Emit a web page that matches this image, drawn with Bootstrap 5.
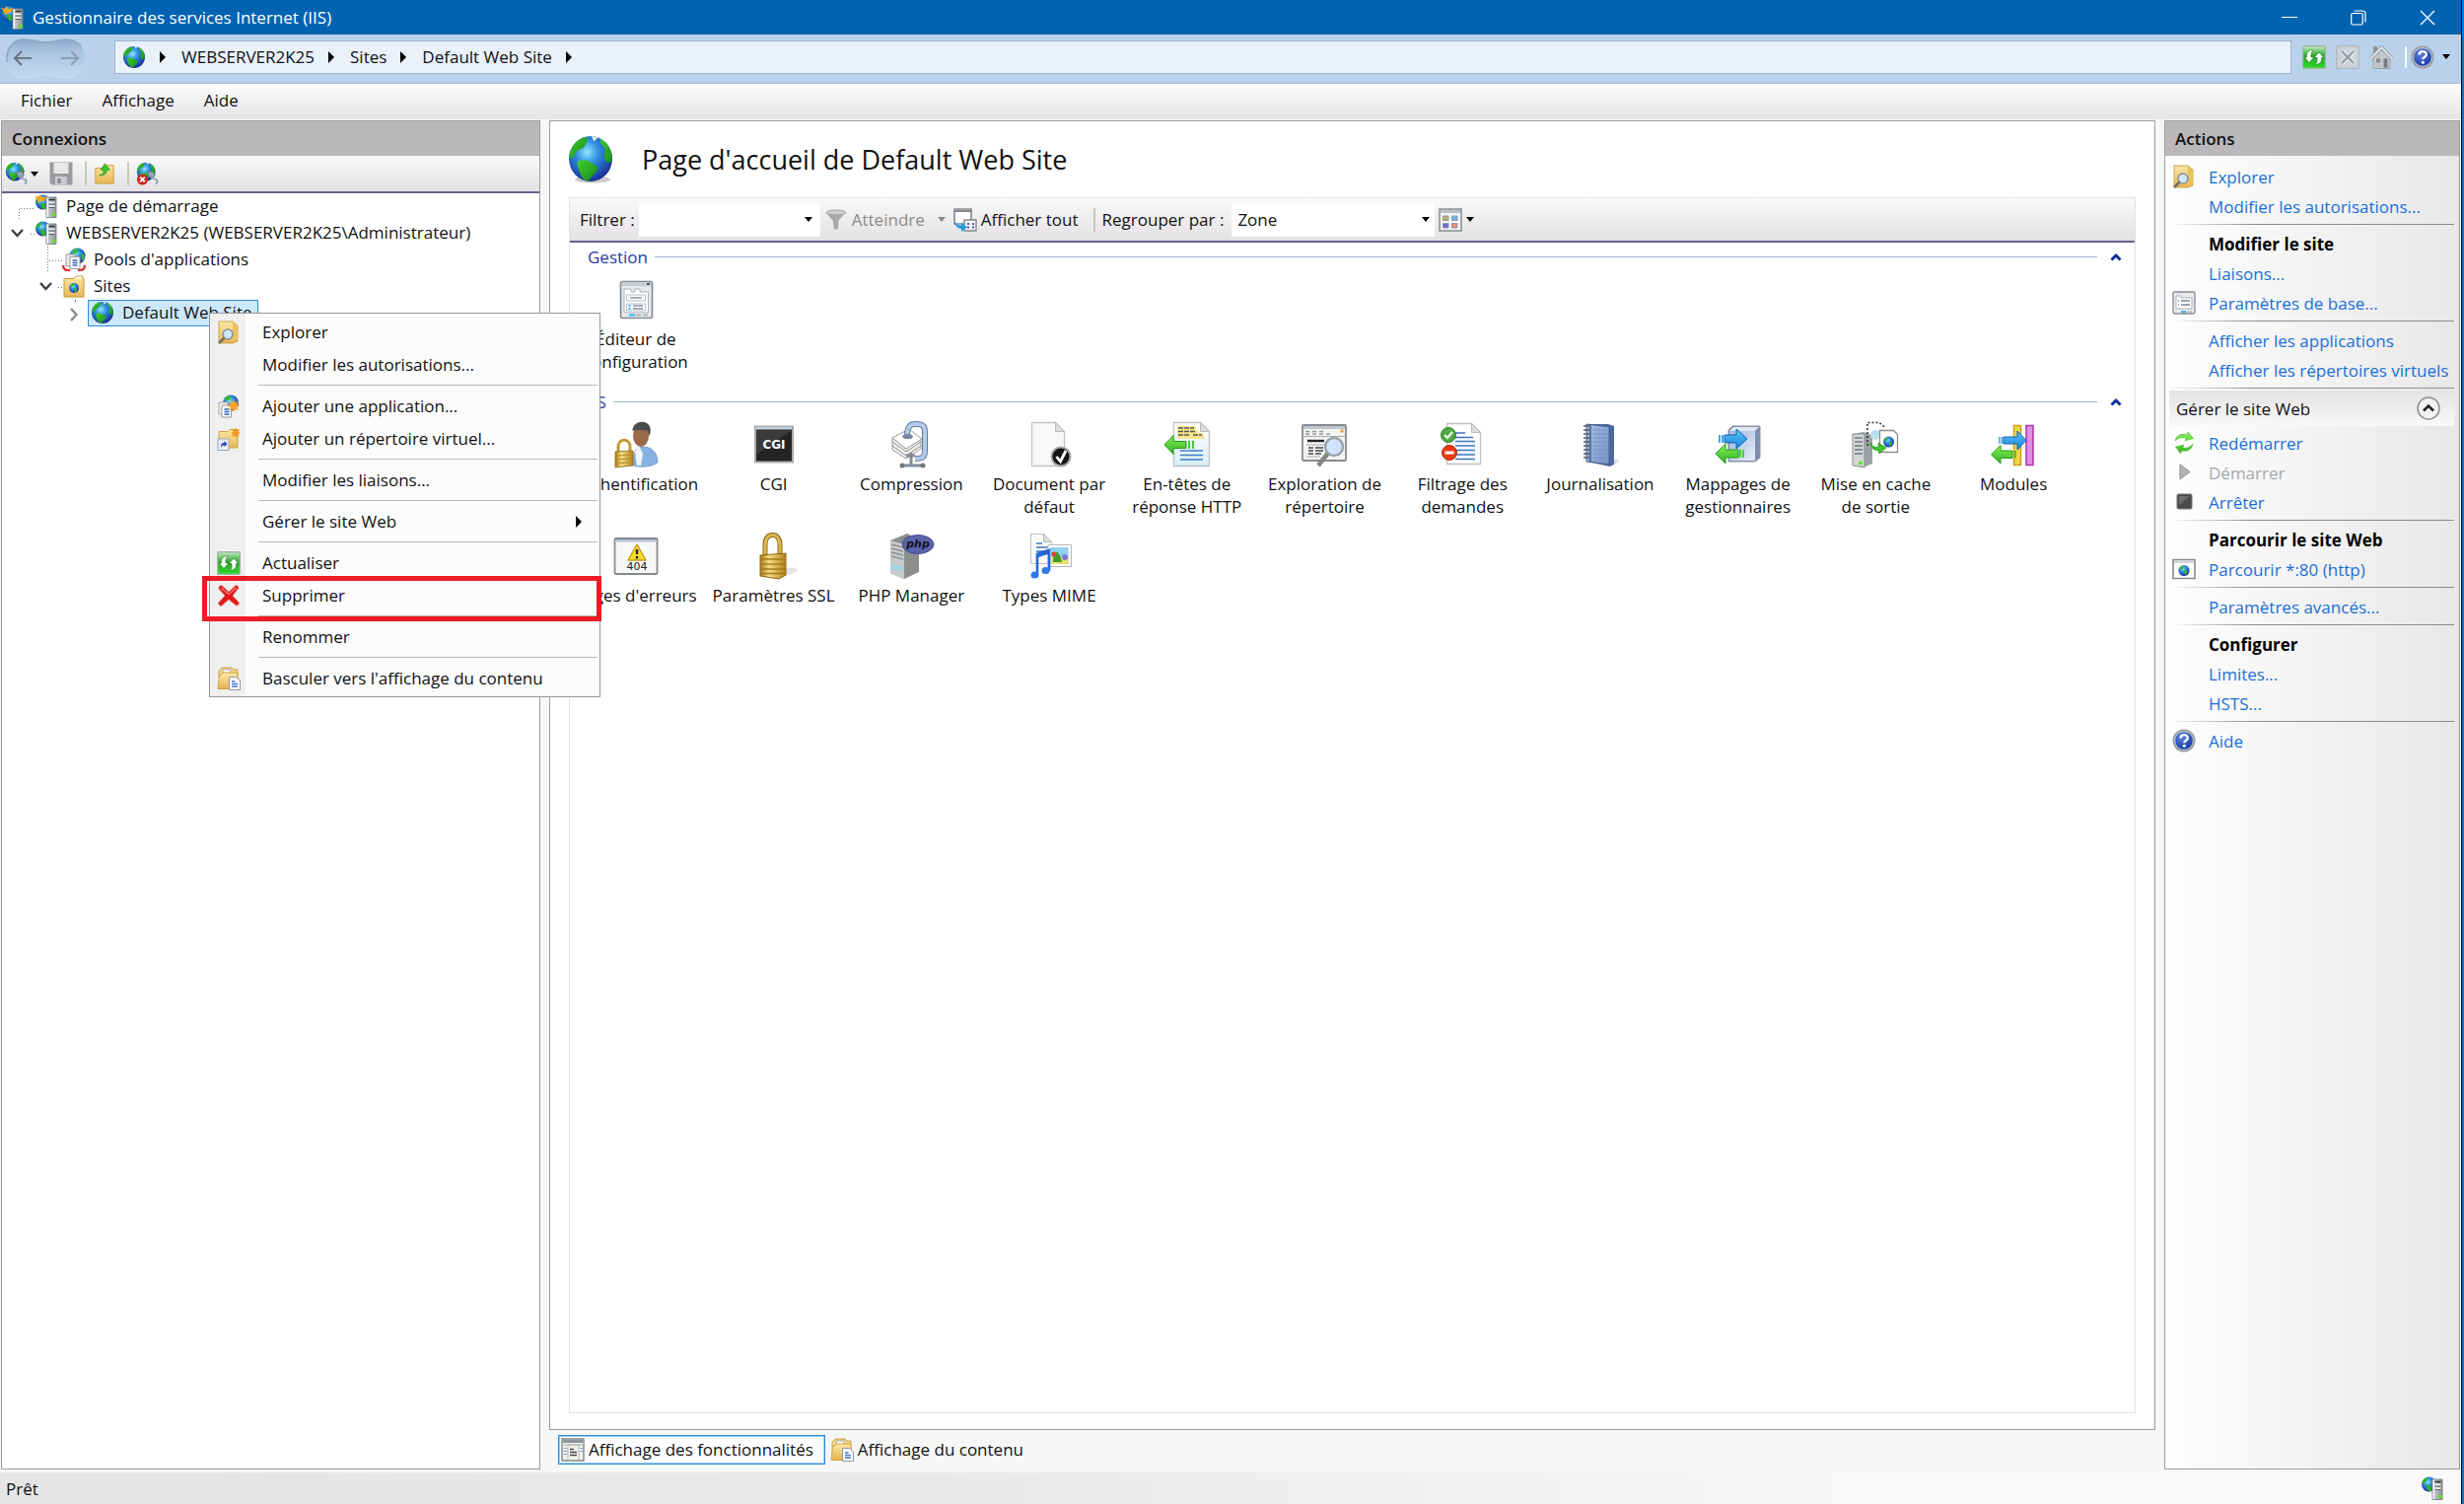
<!DOCTYPE html>
<html lang="fr">
<head>
<meta charset="utf-8">
<meta name="viewport" content="width=device-width, initial-scale=1">
<title>Gestionnaire des services Internet (IIS)</title>
<link href="https://cdn.jsdelivr.net/npm/bootstrap@5.3.0/dist/css/bootstrap.min.css" rel="stylesheet">
<style>
body{font-family:"Open Sans","Noto Sans",sans-serif;font-size:17px;line-height:23px;color:#111;background:#0078d7;padding-right:2px}
a{text-decoration:none}
svg{display:block;flex:none}
button{background:none;border:0;padding:0;color:inherit}
.app{border-right:1px solid #000;background:#f7f7f7}
.titlebar{height:35px;background:#0063b1;color:#fff;padding:0 26px 0 1px}
.titlebar h1{font-size:17px;line-height:23px;margin:0 0 0 8px;font-weight:400}
.winbtns{gap:54px}
.navstrip{height:50px;background:#b9d1ea;border-bottom:1px solid #a9bdd6;padding:0 11px 0 5px}
.address{height:34px;background:#e9f1fb;border:1px solid #a0b4d0;margin:0 11px 3px 29px;padding:0 0 1px 7px}
.address a{color:#111}
.address ol{list-style:none;margin:0;padding:0}
.crumb{margin:0 16px 0 14px}
.navtools{gap:10px}
.navsep{width:2px;height:22px;background:#f4f8fc;margin:0 4px 0 12px}
.menubar{height:36px;background:linear-gradient(#fdfdfd,#e5e3e5);padding:0 0 3px 21px;gap:30px}
.menubar a{color:#111}
.work{padding:1px 1px 3px 1px;gap:9px}
.pane{border:1px solid #9c9c9c;background:#fff}
.pane-left{width:547px}
.pane-right{width:300px;background:linear-gradient(90deg,#fefefe,#e8e8e8)}
.pane-title{height:35px;background:#bab8ba;font-size:17px;font-weight:600;line-height:23px;margin:0;padding:6px 10px}
.toolstrip{background:linear-gradient(#fafafa,#e3e1e3);border-bottom:2px solid #66638f}
.conn-tools{height:38px;padding-left:3px}
.conn-tools .vsep{margin:0 7px 0 12px}
.conn-tools .split{gap:2px;margin-right:11px}
.vsep{width:2px;height:24px;background:#c9c9b4}
.tree{list-style:none;margin:0;padding:0}
.tree li{height:27px}
.tree .node{height:27px;padding:0 5px 2px 0;gap:8px}
.tree .picked{background:#cce8ff;border:1px solid #2a8dde;margin-left:-3px;padding-left:2px}
.page-head{height:77px;padding:0 0 0 19px;gap:30px}
.page-head h2{font-size:27px;line-height:36px;margin:0;font-weight:400}
.features{margin:0 19px;border:1px solid #e3e3e3}
.filterbar{height:45px;padding-left:10px}
.goto{gap:5px;margin-left:5px}
.combo{height:34px;background:#fff;border:0;padding:0}
.combo input{width:164px;height:34px;border:0;outline:0;background:transparent;padding:0 6px}
.combo select{appearance:none;width:206px;height:34px;border:0;outline:0;background:transparent;padding:0 6px;color:#111}
.combo .caret{position:absolute;right:5px;top:14px;pointer-events:none}
.filterbar .vsep{margin:0 7px 0 15px}
.dim{color:#8b8b8b}
.grp{color:#2b3b9c;margin-top:2px;padding:0 13px 0 18px;height:24px}
.grp-next{margin-top:17px}
.grp hr{margin:0 13px 0 7px;border:0;height:1px;background:#9fb1da;opacity:1}
.tiles{display:grid;grid-template-columns:repeat(auto-fill,minmax(139px,1fr));margin:0 53px 0 -3px;row-gap:15px;padding:8px 0 0}
.tiles a{color:#111;text-align:center;height:98px;white-space:nowrap;gap:4px}
.viewtabs{height:40px;padding:5px 0 6px 9px;gap:2px}
.viewtabs button{border:1px solid transparent;padding:0 11px 0 2px;gap:4px;height:30px}
.viewtabs .on{background:#fff;border:1px solid #2a8dde;outline:1px solid #9fcbf0;outline-offset:-2px}
.status{height:32px;background:linear-gradient(90deg,#e6e5e6,#eae9ea 40%,#fafafa 80%);padding:0 17px 0 6px}
.acts{padding:6px 5px 0 4px}
.act{height:30px;padding-left:3px;gap:13px;color:#1a6fd6;white-space:nowrap}
.act .slot{width:24px;height:24px}
.act-head{font-weight:700;color:#000}
.act-off{color:#a8a8a8}
.cut{height:8px;padding-top:3px}
.cut::before{content:"";display:block;height:1px;background:linear-gradient(90deg,rgba(140,140,140,0),#8c8c8c 30%)}
.subhead{height:36px;background:linear-gradient(#e4e2e4,#f9f9f9);margin:-2px 0 2px;padding:0 14px 0 7px;color:#111}
.ctx{position:absolute;left:212px;top:317px;width:397px;background:linear-gradient(90deg,#f0f0f0 36px,#fcfcfc 36px);border:1px solid #979797;padding:2px;z-index:5}
.ctx button{height:33px;width:100%;text-align:left;padding:0 8px 0 5px;gap:22px}
.ctx .slot{width:24px;height:24px}
.ctx hr{margin:4px 0 4px 47px;border:0;height:1px;background:#b9b6ae;opacity:1}
.marker{position:absolute;left:205px;top:584px;width:405px;height:46px;border:5px solid #ed1c24;z-index:6;pointer-events:none}
</style>
<script src="https://cdn.jsdelivr.net/npm/bootstrap@5.3.0/dist/js/bootstrap.bundle.min.js"></script>
</head>
<body>
<svg width="0" height="0" class="position-absolute" aria-hidden="true">
<defs>
<radialGradient id="gSea" cx=".42" cy=".35" r=".65"><stop offset="0" stop-color="#8fe6fb"/><stop offset=".4" stop-color="#2f8fe0"/><stop offset="1" stop-color="#1b2f96"/></radialGradient>
<linearGradient id="gLand" x1="0" y1="0" x2="1" y2="1"><stop offset="0" stop-color="#3fd02c"/><stop offset="1" stop-color="#178a1c"/></linearGradient>
<linearGradient id="gGold" x1="0" x2="1"><stop offset="0" stop-color="#a57a16"/><stop offset=".35" stop-color="#f6dd85"/><stop offset="1" stop-color="#b08018"/></linearGradient>
<linearGradient id="gFold" x1="0" y1="0" x2="0" y2="1"><stop offset="0" stop-color="#fbe9a6"/><stop offset="1" stop-color="#e6b653"/></linearGradient>
<linearGradient id="gSteel" x1="0" x2="1"><stop offset="0" stop-color="#d3d8dc"/><stop offset="1" stop-color="#8b9196"/></linearGradient>
<linearGradient id="gGreenBtn" x1="0" y1="0" x2="0" y2="1"><stop offset="0" stop-color="#c4eec2"/><stop offset=".45" stop-color="#27a528"/><stop offset="1" stop-color="#27dc25"/></linearGradient>
<linearGradient id="gGreen" x1="0" y1="0" x2="0" y2="1"><stop offset="0" stop-color="#8af05a"/><stop offset="1" stop-color="#2eb31d"/></linearGradient>
<linearGradient id="gBlue" x1="0" y1="0" x2="0" y2="1"><stop offset="0" stop-color="#5cc5fa"/><stop offset="1" stop-color="#1284dc"/></linearGradient>
<linearGradient id="gBook" x1="0" y1="0" x2="1" y2="1"><stop offset="0" stop-color="#a9bfe3"/><stop offset="1" stop-color="#7593c6"/></linearGradient>
<linearGradient id="gBox" x1="0" y1="0" x2="1" y2="1"><stop offset="0" stop-color="#9fb4dc"/><stop offset="1" stop-color="#e6effc"/></linearGradient>
<linearGradient id="gCap" x1="0" y1="0" x2="0" y2="1"><stop offset="0" stop-color="#8ea9c9"/><stop offset=".3" stop-color="#a9c3e0"/><stop offset="1" stop-color="#c8dcf1"/></linearGradient>
<radialGradient id="gHelp" cx=".4" cy=".3" r=".8"><stop offset="0" stop-color="#5e86e6"/><stop offset="1" stop-color="#0d2f96"/></radialGradient>
<linearGradient id="gPage" x1="0" y1="0" x2="0" y2="1"><stop offset="0" stop-color="#fff"/><stop offset="1" stop-color="#d9edf7"/></linearGradient>
</defs>
<symbol id="globe" viewBox="0 0 24 24"><circle cx="12" cy="12" r="11" fill="url(#gSea)"/><path d="M9.500 1.300C4.500 2.400 1.200 6.800 1.100 11.800c1.600.6 2.600-1.300 3.500-3C6 7.400 8.800 7.200 9.500 5 9.800 3.800 11 2.600 9.500 1.300z" fill="url(#gLand)"/><path d="M17.200 2.300c3.700 2 5.900 5.700 5.700 10.200-1.200 2.600-3.700 1.400-4-1.300-.2-2 1-2.700.2-4.200-.6-1.300-2.700-2.300-1.900-4.700z" fill="url(#gLand)"/><path d="M5.600 13.200c2.600-1.600 6.600.2 9.400 2.300 1.300 1-.2 3.200-2 4.600-1.200 1-1.600 2.800-3.300 2.600-2.700-1.600-3-4-3.800-5.800-.7-1.300-1-2.900-.3-3.700z" fill="url(#gLand)"/><path d="M12.500 1l3.300.8-2.200 1.700z" fill="#eaf8ee"/></symbol>
<symbol id="server" viewBox="0 0 24 24"><circle cx="8.500" cy="8" r="7.500" fill="url(#gSea)"/><path d="M6.500 1C3.300 2 1.200 4.800 1.100 8c2 0 2.600-2.400 4.300-3C7 4.400 7.600 2 6.500 1zM6.500 8.500c3-.4 5 2 4.500 6.600C7 15.600 5.500 11.500 6.500 8.500z" fill="#2fb52a"/><path d="M12 3h10v20.500H12z" fill="url(#gSteel)" stroke="#7b8084" stroke-width=".9"/><path d="M12.500 3.500H14v19.500h-1.500z" fill="#f2f4f5"/><path d="M14.500 5.500h6" stroke="#2f3336" stroke-width="1.600"/><path d="M14.500 8.500h6M14.500 12h6" stroke="#f4f6f7" stroke-width="1.500"/><path d="M14.500 10h6M14.500 13.500h6" stroke="#5d6468"/><circle cx="20" cy="20.500" r="2" fill="#63e020"/></symbol>
<symbol id="start" viewBox="0 0 24 24"><use href="#server"/><path d="M0 1.500 3.500 3 5.500 0 8 3.500l4-2-1.500 5-4 .5L4 9.500 3 6z" fill="#f6a81c"/></symbol>
<symbol id="pool" viewBox="0 0 24 24"><circle cx="15.500" cy="8.500" r="8" fill="url(#gSea)"/><path d="M12 1.500c5-2 5 2 3 4l-5 1zM19 6c4 0 5 5 2 8z" fill="#35bd2d"/><path d="M4 7h9v12H4z" fill="#eee" stroke="#999"/><path d="M8 9.500h10v12H8z" fill="#fff" stroke="#999"/><path d="M10.500 13h5M10.500 15.500h5M10.500 18h5" stroke="#2f62b5" stroke-width="1.300"/><path d="M1 18c0 4 3 5.500 7 5M23 18c0 4-3 5.500-7 5" fill="none" stroke="#d33" stroke-width="2.400"/></symbol>
<symbol id="sites" viewBox="0 0 24 24"><path d="M2 4.500h10l2-2.500h7v3h1v18H2z" fill="url(#gFold)" stroke="#c79b3c"/><path d="M14 3.500h6" stroke="#fff" stroke-width="1.500"/><circle cx="12" cy="14" r="5" fill="url(#gSea)"/><path d="M9 11c1-1.500 3-1.500 3.500-1s-1 3-3.500 3zM12 14c3-.5 4 2 1 4.500z" fill="#35bd2d"/></symbol>
<symbol id="connect" viewBox="0 0 26 26"><use href="#globe" width="22" height="22"/><path d="M12 11.500l6-1 3 3.500-1.500 3-4.500.5z" fill="#8fa7b0" stroke="#5d737c" stroke-width=".8"/><path d="M17 17c1 2 3 1.500 5 2.500s2 4-.5 4.500" fill="none" stroke="#8aa8b8" stroke-width="2.200"/></symbol>
<symbol id="disconnect" viewBox="0 0 26 26"><use href="#connect"/><circle cx="7" cy="19.500" r="6" fill="#cf2626"/><path d="M4.500 17l5 5m0-5l-5 5" stroke="#fff" stroke-width="2"/></symbol>
<symbol id="floppy" viewBox="0 0 24 24"><path d="M.5.5h23v23H3l-2.500-2z" fill="#999b9e"/><path d="M4.500 1h15v11h-15z" fill="#e8e8e8"/><path d="M6 15h12v8H6z" fill="#c9cacc"/><path d="M8.500 17h3v5h-3z" fill="#85878a"/></symbol>
<symbol id="upfolder" viewBox="0 0 24 24"><path d="M2 6h11l2-3h7v20H2z" fill="url(#gFold)" stroke="#c79b3c"/><path d="M6 14c4-1 5-3 5-6H7.500L12.500 1 18 8h-3.500c0 4-3 7-8.500 6z" fill="#3dc32e" stroke="#238a1c" stroke-width=".7"/></symbol>
<symbol id="explore" viewBox="0 0 24 24"><path d="M2 1h14l5 4v16l-5 2H2z" fill="url(#gFold)" stroke="#cda548"/><path d="M16 1v20l5-2V5z" fill="#e9c25d"/><circle cx="11" cy="14" r="5" fill="#cfe6f8" stroke="#8493a3" stroke-width="1.600"/><path d="M7.500 17.500 2 23" stroke="#77706a" stroke-width="2.600"/></symbol>
<symbol id="settings" viewBox="0 0 24 24"><rect x="1" y="1" width="22" height="22" rx="1.500" fill="#e9ebee" stroke="#868a8f" stroke-width="1.300"/><path d="M4 5h5v2h11v11H4z" fill="#fff" stroke="#a9b0bb"/><path d="M6 10h1m2 0h9M6 14h1m2 0h9" stroke="#7a8494" stroke-width="1.300"/><path d="M9 21h5" stroke="#30b5f0" stroke-width="1.800"/><path d="M15 21h5" stroke="#bbb" stroke-width="1.500"/></symbol>
<symbol id="refresh" viewBox="0 0 24 24"><rect x=".7" y=".7" width="22.600" height="22.600" rx="1" fill="url(#gGreenBtn)" stroke="#9fb89f" stroke-width="1.400"/><path d="M10 4.500C5 5.500 4 8.500 4.500 12H2l5 5.500 5-5.500H9c0-3 0-5 1.500-6.500zM14 19.500c5-1 6-4 5.500-7H22L17 7l-5 5.500h3c0 3 0 5-1.500 6.500z" fill="#fff" stroke="#1c7f1c" stroke-width=".7"/></symbol>
<symbol id="stopx" viewBox="0 0 24 24"><rect x=".7" y=".7" width="22.600" height="22.600" rx="1" fill="#ccd2d9" stroke="#b0b7bf" stroke-width="1.300"/><path d="M6 6l12 12M18 6 6 18" stroke="#fff" stroke-width="4.500"/><path d="M6 6l12 12M18 6 6 18" stroke="#9aa1a8" stroke-width="2.600"/></symbol>
<symbol id="home" viewBox="0 0 24 24"><path d="M4 1h4v8H4z" fill="#8f9296"/><path d="M4 12v11.500h17V12l-8.500-8z" fill="#c3c7cb" stroke="#9da2a8"/><path d="M1 14 12.500 2 23.500 14" fill="none" stroke="#8f959c" stroke-width="3.600"/><path d="M1 14 12.500 2 23.500 14" fill="none" stroke="#dfe2e5" stroke-width="2"/><path d="M7 13.500h4v4H7z" fill="#84898e"/><path d="M14.500 13.500h4v9h-4z" fill="#777c82"/></symbol>
<symbol id="help" viewBox="0 0 24 24"><circle cx="12" cy="12" r="11.500" fill="#9b9da3"/><circle cx="12" cy="12" r="9.300" fill="url(#gHelp)" stroke="#d7dbe6" stroke-width=".8"/><path d="M8.500 9.500C8.500 5 15.800 5 15.800 9.200c0 2.600-3.500 2.800-3.500 5" fill="none" stroke="#fff" stroke-width="2.300"/><circle cx="12.300" cy="17.300" r="1.500" fill="#fff"/></symbol>
<symbol id="addapp" viewBox="0 0 24 24"><circle cx="14" cy="8.500" r="8" fill="url(#gSea)"/><path d="M9 2.500c5-3 6 1 4 3l-5 1z" fill="#35bd2d"/><path d="M2 8h9v12H2z" fill="#eee" stroke="#aaa"/><path d="M5 11h9.500v12H5z" fill="#fff" stroke="#999"/><path d="M7.500 15h5M7.500 17.500h5M7.500 20h5" stroke="#2f62b5" stroke-width="1.300"/><path d="M17 4.500l1.300 3.700 3.500-1.500-1.600 3.500 3.600 1.300-3.600 1.300 1.600 3.500-3.500-1.500L17 18.500l-1.300-3.700-3.500 1.500 1.600-3.500-3.600-1.300 3.600-1.300-1.600-3.500 3.500 1.500z" fill="#f9a42a"/></symbol>
<symbol id="addvdir" viewBox="0 0 24 24"><path d="M2 4.500h9l2-2h8V21H2z" fill="url(#gFold)" stroke="#cfa345"/><path d="M19 0l1 3 3-1-1.200 2.800L24 6l-2.500 1 1 3-2.500-1.200L19 11.500l-1-2.700-3 1.200 1.200-3L14 6l2.500-1.200L15 2l3 1z" fill="#f79a20"/><path d="M1 12h11v11.500H1z" fill="#eaf0fa" stroke="#9aa4b8"/><path d="M4 21c0-4 1-5 3.500-5v-2l3 3.300-3 3v-2C6 18.300 5 19 4 21z" fill="#2a3fae"/></symbol>
<symbol id="redx" viewBox="0 0 24 24"><path d="M5 1.500 12 8l7-6.500c1.500-.5 3.500 1.300 3 3L16 12l6.500 7c.3 1.800-1.700 3.500-3.200 3L12 16l-7.300 6.500C3 22.500.8 20.800 1.500 19L8 12 1.700 5C1.200 3 3.300 1 5 1.500z" fill="#dc1919" stroke="#f2a09b"/><path d="M4.500 4 12 10.500 19.500 4" fill="none" stroke="#f9736b" stroke-width="1.400"/></symbol>
<symbol id="content" viewBox="0 0 24 24"><path d="M2 4l3-3h10l2 2h4v8H2z" fill="#f2d98d" stroke="#c9a04a"/><path d="M6 3h8v7H6z" fill="#fff" stroke="#aaa"/><path d="M1 22.500 2.500 9 7 6h14v13l-4 3.500z" fill="url(#gFold)" stroke="#cfa345"/><path d="M12.500 10.500h7l4 3.500v9.500h-11z" fill="#fff" stroke="#8d97a6"/><path d="M15 15h3.500M15 17.500h6M15 20h6" stroke="#4576c4" stroke-width="1.300"/></symbol>
<symbol id="restart" viewBox="0 0 24 24"><path d="M3 10C4 4 10 2 15 4l1-3 5.500 6.500L13 10l1-3C10 6 6 7 3 10zM21 13c-1 7-7 8-11.500 7l-1 3L3.500 16 12 14l-1.200 3C14 18 18 17 21 13z" fill="url(#gGreen)" stroke="#63b84f" stroke-width=".6"/></symbol>
<symbol id="play" viewBox="0 0 24 24"><path d="M8 4l10 7.500L8 19z" fill="#b4b4b4" stroke="#8c8c8c"/></symbol>
<symbol id="halt" viewBox="0 0 24 24"><rect x="5" y="4" width="15" height="15" rx="1.500" fill="#4a4a4a" stroke="#777"/><path d="M7 6h11l-11 9z" fill="#6d6d6d"/></symbol>
<symbol id="browse" viewBox="0 0 24 24"><path d="M1 2.500h22v19H1z" fill="#fff" stroke="#878b90" stroke-width="1.600"/><path d="M2 3.500h20v2.500H2z" fill="#cdd3da"/><circle cx="12" cy="13.500" r="5.500" fill="url(#gSea)"/><path d="M8 11c1-2 3.500-2.500 4-1.500s-1 3-4 3.500zM12 13c4-.5 4 3 1 5z" fill="#35bd2d"/></symbol>
<symbol id="funnel" viewBox="0 0 22 22"><path d="M1 4l6.500 7.500L9 21l4-1 .500-8.500L21 3z" fill="#a9a9a9"/><ellipse cx="11" cy="3.500" rx="10" ry="2.500" fill="#cfcfcf" stroke="#999" stroke-width=".8"/></symbol>
<symbol id="showall" viewBox="0 0 24 24"><path d="M1 1h17v15H1z" fill="#fff" stroke="#85898e" stroke-width="1.600"/><path d="M1 3h17" stroke="#85898e" stroke-width="2"/><path d="M11 12h12v11H11z" fill="#f6f8fb" stroke="#85898e" stroke-width="1.400"/><path d="M14 16h2m3 0h2m-7 3.500h2m3 0h2" stroke="#4c55b8" stroke-width="1.800"/><path d="M1 12c1 4 4 6 7 5.500v-3l6 5-6 4.500v-3C3 20.500 1 17 1 12z" fill="#2a9ae4"/></symbol>
<symbol id="views" viewBox="0 0 24 24"><path d="M1 1h22v22H1z" fill="#f4f5f7" stroke="#878b90" stroke-width="1.500"/><path d="M2 2h20v3H2z" fill="#b8c0ca"/><path d="M4.500 8h5.500v4.500H4.500z" fill="#b7b45c" stroke="#8e99ad"/><path d="M13.500 8H19v4.500h-5.500z" fill="#6ab9e8" stroke="#8e99ad"/><path d="M4.500 15.500h5.500V20H4.500z" fill="#6f6ad8" stroke="#8e99ad"/><path d="M13.500 15.500H19V20h-5.500z" fill="#ee9168" stroke="#8e99ad"/></symbol>
<symbol id="featview" viewBox="0 0 24 24"><path d="M1 1h22v22H1z" fill="#f1f1ee" stroke="#83878c" stroke-width="1.400"/><path d="M2 2h20v3H2z" fill="#8f959c"/><path d="M3 7h18" stroke="#c3c3bf" stroke-width="2"/><path d="M7 8v14M18 8v14" stroke="#bbb"/><path d="M2.500 10.500h4M2.500 13.500h4M2.500 16.500h4M19 10.500h3M19 13.500h3" stroke="#7fb1dd"/><path d="M9 11.500h4M9 14.500h7M9 17.500h7" stroke="#444" stroke-width="1.300"/></symbol>
<symbol id="tri" viewBox="0 0 6 12"><path d="M0 0l6 6-6 6z"/></symbol>
<symbol id="down" viewBox="0 0 8 5"><path d="M0 0h8L4 5z"/></symbol>
<symbol id="fold" viewBox="0 0 12 9"><path d="M1.500 7.500 6 3l4.500 4.500" fill="none" stroke="#0d2f9c" stroke-width="3"/></symbol>
<symbol id="f-config" viewBox="0 0 48 48"><rect x="8.500" y="5.500" width="32" height="37" rx="2" fill="#e6e9ec" stroke="#85898d" stroke-width="1.600"/><path d="M10 7h29v3H10z" fill="#c7cdd3"/><path d="M35 8h3" stroke="#4b5d70" stroke-width="2"/><path d="M12 13h7v3h4v-3h5v3h8.500v21H12z" fill="#fff" stroke="#a9b2be"/><path d="M14.500 19h19v6h-19zM14.500 28h19v7h-19z" fill="#fff" stroke="#b7c0cb"/><path d="M18 22h12M21 30h10M21 33h10" stroke="#8a9098" stroke-width="1.400"/><path d="M16.500 30h2m-2 3h2M17 39.500h6" stroke="#27bdf2" stroke-width="2"/><path d="M24 39.500h5M31 39.500h5" stroke="#b5b5b5" stroke-width="2"/></symbol>
<symbol id="f-auth" viewBox="0 0 48 48"><path d="M21 45c-1-11 2-19 10-19 10 0 15 7 15 16-7 5-18 5-25 3z" fill="#86b2e2" stroke="#6c96c4" stroke-width=".8"/><path d="M27 25l4 8-2 12h-4l-2-14z" fill="#f3f6fa"/><ellipse cx="29" cy="15" rx="8" ry="11" fill="#9b6a4b"/><path d="M20.500 10c0-9 10-11 14.500-8 5 3 4 10 2.500 13L35 9c-4 1-10-1-14.500 1z" fill="#4b4b4d"/><path d="M6 32v-6c0-9 12-9 12 0v6" fill="none" stroke="#c29a33" stroke-width="3"/><path d="M3 31l18-1v15l-18 2z" fill="url(#gGold)" stroke="#8d6913" stroke-width=".8"/><path d="M3 35l18-1M3 39l18-1M3 43l18-1.500" stroke="#b58a25"/></symbol>
<symbol id="f-zip" viewBox="0 0 48 48"><path d="M5 17v12l14 9 15-10V18L19 28z" fill="#f1f1f1" stroke="#9a9a9a"/><path d="M5 17 22 8l13 10-16 10z" fill="#fff" stroke="#9a9a9a"/><path d="M5 21l14 10 15-10M5 25l14 10 15-10" fill="none" stroke="#8a8a8a"/><path d="M20 15C20 2 26 3 29 3c8 0 9 3 9 8v19c0 7-3 8-10 8" fill="none" stroke="#62789c" stroke-width="6"/><path d="M20 15C20 2 26 3 29 3c8 0 9 3 9 8v19c0 7-3 8-10 8" fill="none" stroke="#b6cae8" stroke-width="4"/><path d="M15 16c0-4 11-4 11 0l-2 2h-7z" fill="#76879f"/><path d="M24 32v12M19 35h9M15 45h20" stroke="#858b94" stroke-width="3"/><circle cx="15" cy="45" r="2.500" fill="#777"/><circle cx="36" cy="45" r="2.500" fill="#777"/></symbol>
<symbol id="f-doc" viewBox="0 0 48 48"><path d="M6.500 1.500h24l9 9v35h-33z" fill="#f8f8f8" stroke="#c4c4c4" stroke-width="1.300"/><path d="M30.500 1.500v9h9z" fill="#ddd" stroke="#bbb"/><circle cx="36" cy="36" r="9.500" fill="#151515" stroke="#a9a9a9" stroke-width="2"/><path d="M31.500 36l4 5 5.500-11" fill="none" stroke="#fff" stroke-width="2.800"/></symbol>
<symbol id="f-http" viewBox="0 0 48 48"><path d="M10.500 1.500h27l9 9v35h-36z" fill="url(#gPage)" stroke="#bcc3c7" stroke-width="1.300"/><path d="M37.500 1.500v9h9z" fill="#ddd" stroke="#bbb"/><path d="M14 5h19v4h2v3h6v6H14z" fill="#f7e68a"/><path d="M15 7h16M15 10.500h18M15 14h12m3 0h9" stroke="#555" stroke-width="1.500" stroke-dasharray="5 1"/><path d="M1 24 10 14.500v6h13v7H10v6z" fill="url(#gGreen)" stroke="#229d17"/><path d="M26 20v8M30 20v8" stroke="#45c836" stroke-width="2"/><path d="M17 30h23M17 34.500h23M17 39h23" stroke="#3b7fce" stroke-width="1.600"/></symbol>
<symbol id="f-dir" viewBox="0 0 48 48"><rect x="2" y="4" width="44" height="36" rx="1" fill="#f4f4f2" stroke="#878b90" stroke-width="1.800"/><path d="M3 5h42v3H3z" fill="#bdc5ce"/><path d="M5 10.500h18M5 13h26" stroke="#999" stroke-width="1.400" stroke-dasharray="4 3"/><path d="M3 15.500h42" stroke="#aaa"/><path d="M7 20h17" stroke="#222" stroke-width="2.400"/><path d="M6 24h22M6 36h14" stroke="#aaa"/><path d="M8 27h5m2 0h8M8 30h5m2 0h8M8 33h5m2 0h6" stroke="#444" stroke-width="1.700"/><circle cx="34" cy="26" r="9" fill="#cfe4fb" stroke="#9aa0a8" stroke-width="2.400"/><path d="M27.500 33 18 45" stroke="#858585" stroke-width="4.500"/><path d="M42 8.500v3" stroke="#e8a33c" stroke-width="3"/></symbol>
<symbol id="f-filter" viewBox="0 0 48 48"><path d="M8.500 2.500h25l9 9v32h-34z" fill="#fdfdfd" stroke="#c0c0c0" stroke-width="1.300"/><path d="M33.500 2.500v9h9z" fill="#ddd" stroke="#bbb"/><path d="M17 12h10M17 16.500h18M17 20.500h20M17 25h20M17 29.500h20M17 34h20M17 38.500h20" stroke="#3a74c4" stroke-width="1.500"/><circle cx="10" cy="14" r="7.500" fill="#4eab45" stroke="#2c8128"/><path d="M6 14l3 3 5-6" fill="none" stroke="#e9f9e4" stroke-width="2.300"/><circle cx="11" cy="32" r="7.500" fill="#ea3c13" stroke="#b52a08"/><path d="M6.500 32h9" stroke="#fff" stroke-width="3"/></symbol>
<symbol id="f-log" viewBox="0 0 48 48"><path d="M34 40c8-3 12 0 6 3l-8 3z" fill="#ddd"/><path d="M10 3h22l6 2v39l-4 2-24-5z" fill="#4c6aa3"/><path d="M10 3 33 6v38l-23-3z" fill="url(#gBook)" stroke="#4a5f8e"/><path d="M14 4v37" stroke="#4a5f8e" stroke-width="1.500"/><path d="M17 9h14M17 13h14M17 17h14M17 21h14M17 25h14M17 29h14M17 33h14M17 37h14" stroke="#6f93c9" stroke-width="1.200"/><path d="M7 5h6M7 9h6M7 13h6M7 17h6M7 21h6M7 25h6M7 29h6M7 33h6M7 37h6" stroke="#555b66" stroke-width="1.700"/></symbol>
<symbol id="f-map" viewBox="0 0 48 48"><path d="M14 9l4-4h28v32l-5 4H14z" fill="#7d8fac" stroke="#8a94a3"/><path d="M15 10h26v30H15z" fill="url(#gBox)"/><path d="M15 10l4-4h26l-4 4z" fill="#dfe7f3"/><path d="M10 14h12V8l11 10-11 10v-6H10z" fill="url(#gBlue)" stroke="#1763ae"/><path d="M5 14v8M8 14v8" stroke="#2d9be8" stroke-width="1.800"/><path d="M24 29H11v-6L1 33l10 10v-6h13z" fill="url(#gGreen)" stroke="#229d17"/><path d="M26 29v8M29 29v8" stroke="#45c836" stroke-width="1.800"/></symbol>
<symbol id="f-cache" viewBox="0 0 48 48"><path d="M1 13l11-2 9 3v29l-9 4-11-2z" fill="#9ba0a4"/><path d="M1 13h12v34L1 45z" fill="#d3d6d8" stroke="#8b8f93"/><path d="M3 17h8M3 21h8M3 25h8M3 29h8M3 33h8" stroke="#73787c" stroke-width="1.500"/><path d="M16 25V1.500h12l6 5" fill="none" stroke="#333" stroke-width="1.600" stroke-dasharray="2 2"/><circle cx="24" cy="14" r="5" fill="#b9e0ee"/><path d="M28.500 9.500h14l4 4v18h-18z" fill="#fff" stroke="#8d8d8d" stroke-width="1.300"/><circle cx="37.500" cy="21" r="5.500" fill="url(#gSea)"/><path d="M34 18c2-2 5-1 3 1l-3 2zM38 21c4 0 3 3 0 5z" fill="#35bd2d"/><path d="M19 22c2 4 5 5 8 4v-4l8 5-7 6-1-3c-4 0-8-3-8-8z" fill="#3cc02c" stroke="#23901a" stroke-width=".6"/><circle cx="9" cy="42.500" r="2" fill="#63e020"/></symbol>
<symbol id="f-mod" viewBox="0 0 48 48"><path d="M24.500 4.500h7v40h-7z" fill="#f2d44c" stroke="#c9a217" stroke-width="1.500"/><path d="M37 4.500h7v40h-7z" fill="#e08fe3" stroke="#a835a8" stroke-width="1.500"/><path d="M14 16h14v-6l9 9.500L28 29v-6H14z" fill="url(#gBlue)" stroke="#1763ae"/><path d="M10 16v7M12.500 16v7" stroke="#2d9be8" stroke-width="1.400"/><path d="M23 30H11v-5.500L1.500 34l9.500 9v-5.500h12z" fill="url(#gGreen)" stroke="#229d17"/><path d="M26 30v7.500" stroke="#45c836" stroke-width="2"/></symbol>
<symbol id="f-ssl" viewBox="0 0 48 48"><path d="M36 36c10-2 16 2 8 5l-12 4z" fill="#e4e4e4"/><path d="M15 25V12c0-13 15-13 15 0v13" fill="none" stroke="#8d6c1a" stroke-width="5"/><path d="M15 25V12c0-13 15-13 15 0v13" fill="none" stroke="#d9b649" stroke-width="3"/><path d="M10 23l26-2v22l-7 4-19-3z" fill="url(#gGold)" stroke="#8d6913"/><path d="M10 27h26M10 32h26M10 37h26M10 41.500h26" stroke="#a67c1c" stroke-width="1.400"/></symbol>
<symbol id="f-mime" viewBox="0 0 48 48"><path d="M5.500 1.500h13l8 8v22h-21z" fill="#fafafa" stroke="#bfbfbf"/><path d="M18.500 1.500v8h8z" fill="#ddd" stroke="#bbb"/><path d="M11 11h6M11 15h12M11 19h14" stroke="#3a74c4" stroke-width="1.500"/><path d="M23 12.500h23.500v22H23z" fill="#fff" stroke="#b5b5b5"/><path d="M25.500 15h18v17h-18z" fill="#8fd0f3"/><path d="M25.500 25h18v7h-18z" fill="#f0e071"/><path d="M28 30c0-14 6-14 9 0z" fill="#3f9d2f"/><circle cx="40" cy="25" r="3" fill="#7b73d4"/><circle cx="29" cy="22" r="2.500" fill="#e0432a"/><path d="M12 43V22l12-4v21" fill="none" stroke="#2667d3" stroke-width="2.600"/><path d="M12 23l12-4" stroke="#2667d3" stroke-width="4.500"/><ellipse cx="9.500" cy="43" rx="4" ry="3.500" fill="#2f78e2"/><ellipse cx="20.500" cy="38.500" rx="4" ry="3.500" fill="#2f78e2"/></symbol>
</svg>

<div class="app d-flex flex-column min-vh-100 position-relative">
<header class="titlebar d-flex align-items-center">
<svg width="24" height="28" viewBox="0 0 24 24" aria-hidden="true"><use href="#start"/></svg>
<h1>Gestionnaire des services Internet (IIS)</h1>
<div class="winbtns ms-auto d-flex">
<button aria-label="Réduire"><svg width="16" height="16" viewBox="0 0 16 16"><path d="M0 7.500h16" stroke="#fff"/></svg></button>
<button aria-label="Restaurer"><svg width="16" height="16" viewBox="0 0 16 16" fill="none" stroke="#fff" stroke-width="1.200"><rect x=".7" y="3.500" width="11.500" height="11.500" rx="1.500"/><path d="M3.500 1h8.500a3 3 0 0 1 3 3v8.500"/></svg></button>
<button aria-label="Fermer"><svg width="16" height="16" viewBox="0 0 16 16"><path d="M1 1l14 14M15 1 1 15" stroke="#fff" stroke-width="1.300"/></svg></button>
</div>
</header>

<nav class="navstrip d-flex align-items-center" aria-label="Adresse">
<svg width="82" height="42" viewBox="0 0 82 42" aria-hidden="true"><path d="M20 1c8 0 13 3 21 3s13-3 21-3c12 0 19 8 19 20s-7 20-19 20c-8 0-13-3-21-3s-13 3-21 3C8 41 1 33 1 21S8 1 20 1z" fill="url(#gCap)"/><path d="M2 24C1 8 9 1 20 1c8 0 13 3 21 3s13-3 21-3c6 0 11 2 15 7" fill="none" stroke="#8fa6c2" stroke-width="1.500"/><path d="M27 20H10m7-7-7 7 7 7" fill="none" stroke="#6b7785" stroke-width="2.200"/><path d="M57 20h17m-7-7 7 7-7 7" fill="none" stroke="#8e9fb3" stroke-width="2.200"/></svg>
<div class="address flex-grow-1 d-flex align-items-center">
<svg width="24" height="24"><use href="#globe"/></svg>
<svg class="crumb" width="6" height="12"><use href="#tri"/></svg>
<ol class="d-flex align-items-center">
<li class="d-flex align-items-center"><a href="#">WEBSERVER2K25</a><svg class="crumb" width="6" height="12"><use href="#tri"/></svg></li>
<li class="d-flex align-items-center"><a href="#">Sites</a><svg class="crumb" width="6" height="12"><use href="#tri"/></svg></li>
<li class="d-flex align-items-center"><a href="#">Default Web Site</a><svg class="crumb" width="6" height="12"><use href="#tri"/></svg></li>
</ol>
</div>
<div class="d-flex align-items-center pb-1">
<div class="navtools d-flex">
<button aria-label="Actualiser"><svg width="24" height="24"><use href="#refresh"/></svg></button>
<button aria-label="Arrêter"><svg width="24" height="24"><use href="#stopx"/></svg></button>
<button aria-label="Accueil"><svg width="24" height="24"><use href="#home"/></svg></button>
</div>
<span class="navsep"></span>
<button class="d-flex align-items-center gap-2" aria-label="Aide"><svg width="24" height="24"><use href="#help"/></svg><svg width="8" height="5"><use href="#down"/></svg></button>
</div>
</nav>

<nav class="menubar d-flex align-items-center" aria-label="Menu">
<a href="#">Fichier</a><a href="#">Affichage</a><a href="#">Aide</a>
</nav>

<main class="work d-flex flex-grow-1">
<section class="pane pane-left d-flex flex-column">
<h2 class="pane-title">Connexions</h2>
<div class="toolstrip conn-tools d-flex align-items-center">
<button class="split d-flex align-items-center" aria-label="Se connecter"><svg width="24" height="24" viewBox="0 0 26 26"><use href="#connect"/></svg><svg width="8" height="5"><use href="#down"/></svg></button>
<button aria-label="Enregistrer"><svg width="24" height="24"><use href="#floppy"/></svg></button>
<span class="vsep"></span>
<button aria-label="Monter"><svg width="22" height="24" viewBox="0 0 24 24"><use href="#upfolder"/></svg></button>
<span class="vsep"></span>
<button aria-label="Supprimer la connexion"><svg width="24" height="24" viewBox="0 0 26 26"><use href="#disconnect"/></svg></button>
</div>
<ul class="tree">
<li class="d-flex"><svg width="33" height="27"><path d="M17.500 29V15.500H33" fill="none" stroke="#777" stroke-dasharray="1 2"/></svg><span class="node d-flex align-items-center"><svg width="24" height="24"><use href="#start"/></svg>Page de démarrage</span></li>
<li class="d-flex"><svg width="33" height="27"><path d="M10 10l5.500 6 5.500-6" fill="none" stroke="#404040" stroke-width="2.400"/><path d="M29 14.500h5" stroke="#777" stroke-dasharray="1 2"/></svg><span class="node d-flex align-items-center"><svg width="24" height="24"><use href="#server"/></svg>WEBSERVER2K25 (WEBSERVER2K25\Administrateur)</span></li>
<li class="d-flex"><svg width="61" height="27"><path d="M46.500 0v27M48 14.500h13" fill="none" stroke="#777" stroke-dasharray="1 2"/></svg><span class="node d-flex align-items-center"><svg width="24" height="24"><use href="#pool"/></svg>Pools d'applications</span></li>
<li class="d-flex"><svg width="61" height="27"><path d="M39 10l5.500 6 5.500-6" fill="none" stroke="#404040" stroke-width="2.400"/><path d="M57 14.500h5" stroke="#777" stroke-dasharray="1 2"/></svg><span class="node d-flex align-items-center"><svg width="24" height="24"><use href="#sites"/></svg>Sites</span></li>
<li class="d-flex"><svg width="90" height="27"><path d="M70 9l5.500 6-5.500 6" fill="none" stroke="#8c8c8c" stroke-width="2.400"/><path d="M74.500 0v2" stroke="#777"/></svg><span class="node picked d-flex align-items-center"><svg width="24" height="24"><use href="#globe"/></svg>Default Web Site</span></li>
</ul>
</section>

<div class="d-flex flex-column flex-grow-1">
<section class="pane flex-grow-1 d-flex flex-column pb-3">
<div class="page-head d-flex align-items-center">
<svg width="44" height="48" viewBox="0 0 44 48"><ellipse cx="24" cy="44" rx="18" ry="3.500" fill="#ccc"/><svg width="44" height="46" viewBox="1 1 22 22" preserveAspectRatio="none"><use href="#globe" width="24" height="24"/></svg></svg>
<h2>Page d'accueil de Default Web Site</h2>
</div>
<div class="features flex-grow-1">
<div class="toolstrip filterbar d-flex align-items-center">
<label for="flt">Filtrer :</label>
<div class="combo d-flex align-items-center position-relative ms-1"><input id="flt" type="text"><button class="pe-2 ps-1" aria-label="Historique"><svg width="8" height="5"><use href="#down"/></svg></button></div>
<button class="goto dim d-flex align-items-center" disabled><svg width="22" height="22"><use href="#funnel"/></svg>Atteindre<svg class="ms-2 me-2" width="8" height="5" fill="#8b8b8b"><use href="#down"/></svg></button>
<button class="d-flex align-items-center gap-1"><svg width="24" height="24"><use href="#showall"/></svg>Afficher tout</button>
<span class="vsep"></span>
<label for="grpby">Regrouper par :</label>
<div class="combo position-relative ms-2"><select id="grpby"><option>Zone</option></select><svg class="caret" width="8" height="5"><use href="#down"/></svg></div>
<button class="d-flex align-items-center gap-1 ms-1" aria-label="Affichages"><svg width="24" height="24"><use href="#views"/></svg><svg width="8" height="5"><use href="#down"/></svg></button>
</div>
<div class="grp d-flex align-items-center"><span>Gestion</span><hr class="flex-grow-1"><svg width="12" height="9"><use href="#fold"/></svg></div>
<div class="tiles">
<a href="#" class="d-flex flex-column align-items-center"><svg width="48" height="48"><use href="#f-config"/></svg><span>Éditeur de<br>configuration</span></a>
</div>
<div class="grp grp-next d-flex align-items-center"><span>IIS</span><hr class="flex-grow-1"><svg width="12" height="9"><use href="#fold"/></svg></div>
<div class="tiles">
<a href="#" class="d-flex flex-column align-items-center"><svg width="48" height="48"><use href="#f-auth"/></svg><span>Authentification</span></a>
<a href="#" class="d-flex flex-column align-items-center"><svg width="48" height="48" viewBox="0 0 48 48"><path d="M5 5.500h38v36H5z" fill="#242424" stroke="#a8abad" stroke-width="2"/><path d="M6 6h36v2.500H6z" fill="#c6cfda"/><path d="M6 9h36L6 34z" fill="#4a4a4a" opacity=".6"/><text x="24" y="28" text-anchor="middle" font-family="DejaVu Sans" font-weight="700" font-size="12" fill="#fff">CGI</text></svg><span>CGI</span></a>
<a href="#" class="d-flex flex-column align-items-center"><svg width="48" height="48"><use href="#f-zip"/></svg><span>Compression</span></a>
<a href="#" class="d-flex flex-column align-items-center"><svg width="48" height="48"><use href="#f-doc"/></svg><span>Document par<br>défaut</span></a>
<a href="#" class="d-flex flex-column align-items-center"><svg width="48" height="48"><use href="#f-http"/></svg><span>En-têtes de<br>réponse HTTP</span></a>
<a href="#" class="d-flex flex-column align-items-center"><svg width="48" height="48"><use href="#f-dir"/></svg><span>Exploration de<br>répertoire</span></a>
<a href="#" class="d-flex flex-column align-items-center"><svg width="48" height="48"><use href="#f-filter"/></svg><span>Filtrage des<br>demandes</span></a>
<a href="#" class="d-flex flex-column align-items-center"><svg width="48" height="48"><use href="#f-log"/></svg><span>Journalisation</span></a>
<a href="#" class="d-flex flex-column align-items-center"><svg width="48" height="48"><use href="#f-map"/></svg><span>Mappages de<br>gestionnaires</span></a>
<a href="#" class="d-flex flex-column align-items-center"><svg width="48" height="48"><use href="#f-cache"/></svg><span>Mise en cache<br>de sortie</span></a>
<a href="#" class="d-flex flex-column align-items-center"><svg width="48" height="48"><use href="#f-mod"/></svg><span>Modules</span></a>
<a href="#" class="d-flex flex-column align-items-center"><svg width="48" height="48" viewBox="0 0 48 48"><rect x="2.500" y="6" width="43" height="36" rx="1" fill="#f7f8f8" stroke="#85898e" stroke-width="1.800"/><path d="M4 7h40v2.500H4z" fill="#b4c4da"/><path d="M25 12 34 28H16z" fill="#fbdc2b" stroke="#c49a10" stroke-width="1.300" stroke-linejoin="round"/><path d="M25 17v5m0 2v2.500" stroke="#222" stroke-width="2.300"/><text x="25" y="38" text-anchor="middle" font-family="DejaVu Sans" font-size="11" fill="#222">404</text></svg><span>Pages d'erreurs</span></a>
<a href="#" class="d-flex flex-column align-items-center"><svg width="48" height="48"><use href="#f-ssl"/></svg><span>Paramètres SSL</span></a>
<a href="#" class="d-flex flex-column align-items-center"><svg width="48" height="48" viewBox="0 0 48 48"><path d="M3 8 20 1l12 6v33L17 47 3 41z" fill="#8b8d8f"/><path d="M3 8l14 4v35L3 41z" fill="#c9cbcd"/><path d="M4 12l12 3M4 16l12 3M4 20l12 3M4 24l12 3" stroke="#8f9294" stroke-width="1.500"/><path d="M4 31l12 3v6L4 37z" fill="#a5d5e2"/><ellipse cx="31" cy="12" rx="16" ry="9.500" fill="#5a64a8" stroke="#46508e"/><text x="31" y="15" text-anchor="middle" font-family="DejaVu Sans" font-weight="700" font-style="italic" font-size="11" fill="#15151f">php</text></svg><span>PHP Manager</span></a>
<a href="#" class="d-flex flex-column align-items-center"><svg width="48" height="48"><use href="#f-mime"/></svg><span>Types MIME</span></a>
</div>
</div>
</section>
<div class="viewtabs d-flex align-items-center">
<button class="on d-flex align-items-center"><svg width="24" height="24"><use href="#featview"/></svg>Affichage des fonctionnalités</button>
<button class="d-flex align-items-center"><svg width="24" height="24"><use href="#content"/></svg>Affichage du contenu</button>
</div>
</div>

<aside class="pane pane-right">
<h2 class="pane-title">Actions</h2>
<div class="acts">
<a href="#" class="act d-flex align-items-center"><svg width="24" height="24"><use href="#explore"/></svg>Explorer</a>
<a href="#" class="act d-flex align-items-center"><span class="slot"></span>Modifier les autorisations...</a>
<div class="cut"></div>
<div class="act act-head d-flex align-items-center"><span class="slot"></span>Modifier le site</div>
<a href="#" class="act d-flex align-items-center"><span class="slot"></span>Liaisons...</a>
<a href="#" class="act d-flex align-items-center"><svg width="24" height="24"><use href="#settings"/></svg>Paramètres de base...</a>
<div class="cut"></div>
<a href="#" class="act d-flex align-items-center"><span class="slot"></span>Afficher les applications</a>
<a href="#" class="act d-flex align-items-center"><span class="slot"></span>Afficher les répertoires virtuels</a>
<div class="cut"></div>
<div class="subhead d-flex align-items-center justify-content-between">Gérer le site Web<button aria-label="Réduire la section"><svg width="24" height="24" viewBox="0 0 24 24"><circle cx="12" cy="12" r="11" fill="#f2f2f2" stroke="#8f8f8f" stroke-width="1.500"/><path d="M7 14.500 12 9.500l5 5" fill="none" stroke="#222" stroke-width="2.600"/></svg></button></div>
<a href="#" class="act d-flex align-items-center"><svg width="24" height="24"><use href="#restart"/></svg>Redémarrer</a>
<div class="act act-off d-flex align-items-center"><svg width="24" height="24"><use href="#play"/></svg>Démarrer</div>
<a href="#" class="act d-flex align-items-center"><svg width="24" height="24"><use href="#halt"/></svg>Arrêter</a>
<div class="cut"></div>
<div class="act act-head d-flex align-items-center"><span class="slot"></span>Parcourir le site Web</div>
<a href="#" class="act d-flex align-items-center"><svg width="24" height="24"><use href="#browse"/></svg>Parcourir *:80 (http)</a>
<div class="cut"></div>
<a href="#" class="act d-flex align-items-center"><span class="slot"></span>Paramètres avancés...</a>
<div class="cut"></div>
<div class="act act-head d-flex align-items-center"><span class="slot"></span>Configurer</div>
<a href="#" class="act d-flex align-items-center"><span class="slot"></span>Limites...</a>
<a href="#" class="act d-flex align-items-center"><span class="slot"></span>HSTS...</a>
<div class="cut"></div>
<a href="#" class="act d-flex align-items-center"><svg width="24" height="24"><use href="#help"/></svg>Aide</a>
</div>
</aside>
</main>

<footer class="status d-flex align-items-center justify-content-between"><span>Prêt</span><svg width="24" height="24"><use href="#server"/></svg></footer>

<div class="ctx" role="menu">
<button role="menuitem" class="d-flex align-items-center"><svg width="24" height="24"><use href="#explore"/></svg>Explorer</button>
<button role="menuitem" class="d-flex align-items-center"><span class="slot"></span>Modifier les autorisations...</button>
<hr>
<button role="menuitem" class="d-flex align-items-center"><svg width="24" height="24"><use href="#addapp"/></svg>Ajouter une application...</button>
<button role="menuitem" class="d-flex align-items-center"><svg width="24" height="24"><use href="#addvdir"/></svg>Ajouter un répertoire virtuel...</button>
<hr>
<button role="menuitem" class="d-flex align-items-center"><span class="slot"></span>Modifier les liaisons...</button>
<hr>
<button role="menuitem" class="d-flex align-items-center"><span class="slot"></span>Gérer le site Web<svg class="ms-auto me-2" width="6" height="12"><use href="#tri"/></svg></button>
<hr>
<button role="menuitem" class="d-flex align-items-center"><svg width="24" height="24"><use href="#refresh"/></svg>Actualiser</button>
<button role="menuitem" class="d-flex align-items-center"><svg width="24" height="24"><use href="#redx"/></svg>Supprimer</button>
<hr>
<button role="menuitem" class="d-flex align-items-center"><span class="slot"></span>Renommer</button>
<hr>
<button role="menuitem" class="d-flex align-items-center"><svg width="24" height="24"><use href="#content"/></svg>Basculer vers l'affichage du contenu</button>
</div>
<div class="marker"></div>
</div>
</body>
</html>
